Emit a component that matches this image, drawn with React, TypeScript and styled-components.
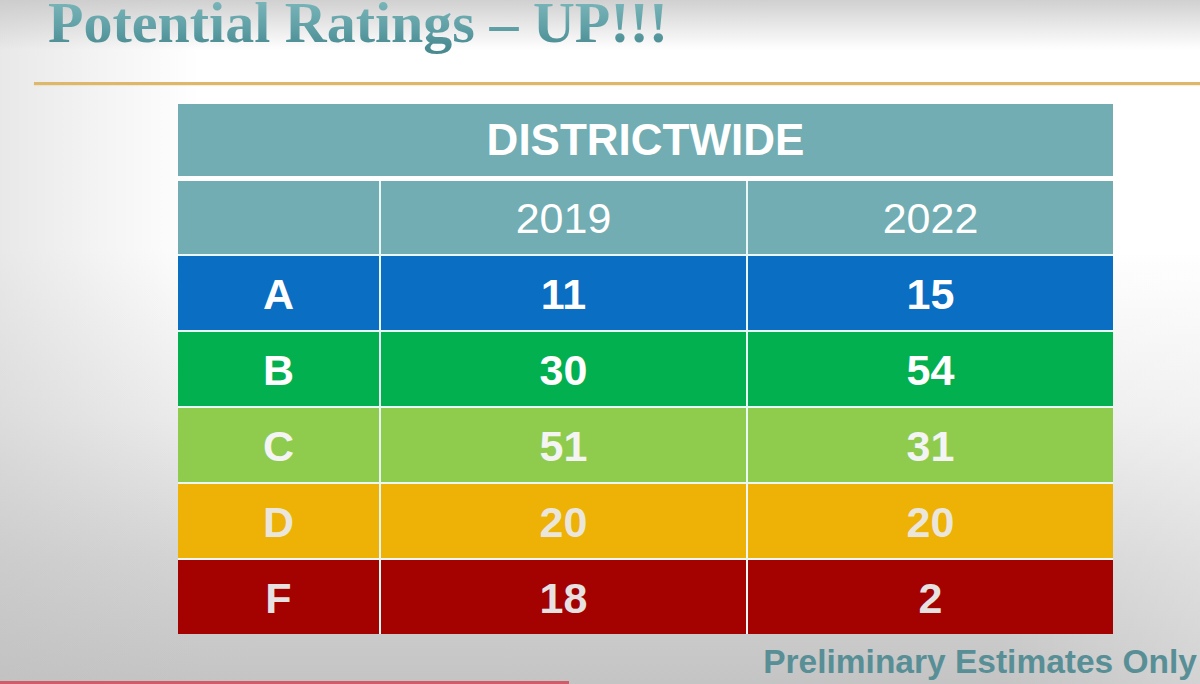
import React from "react";
import styled, { createGlobalStyle } from "styled-components";

const Global = createGlobalStyle`
  html, body { margin: 0; padding: 0; }
  body { width: 1200px; height: 684px; overflow: hidden; font-family: "Liberation Sans", Arial, sans-serif; }
`;

const Slide = styled.div`
  position: relative;
  width: 1200px;
  height: 684px;
  overflow: hidden;
  display: flex;
  flex-direction: column;
  background:
    linear-gradient(180deg, rgba(200,200,200,0.85) 0px, rgba(255,255,255,0) 50px),
    linear-gradient(90deg, rgba(190,190,190,0.35) 0px, rgba(255,255,255,0) 200px, rgba(255,255,255,0) 1000px, rgba(255,255,255,0.25) 1200px),
    linear-gradient(180deg, #ffffff 0px, #ffffff 250px, #ececec 420px, #d4d4d4 560px, #c4c4c4 684px);
`;

const Title = styled.h1`
  margin: 0 0 0 48px;
  padding-bottom: 14px;
  align-self: flex-start;
  font-family: "Liberation Serif", "Times New Roman", serif;
  font-weight: 700;
  font-size: 58px;
  line-height: 46px;
  white-space: nowrap;
  background: linear-gradient(180deg, #7ab6ba 0%, #5d9ea4 50%, #4a8a91 80%, #4a8a91 100%);
  -webkit-background-clip: text;
  background-clip: text;
  color: transparent;
`;

const Rule = styled.div`
  margin: 22px 0 0 34px;
  height: 3px;
  background: #dcb76c;
  box-shadow: 0 1px 1px rgba(230, 200, 140, 0.35);
`;

const Table = styled.div`
  margin: 19px 0 0 178px;
  width: 935px;
  display: flex;
  flex-direction: column;
`;

const Banner = styled.div`
  height: 72px;
  background: #71adb2;
  color: #ffffff;
  font-weight: 700;
  font-size: 44px;
  display: flex;
  align-items: center;
  justify-content: center;
  margin-bottom: 5px;
`;

const Grid = styled.div`
  display: grid;
  grid-template-columns: 201px 365px 365px;
  grid-template-rows: 73px repeat(5, 74px);
  gap: 2px;
  background: #e9f7f7;
`;

const Cell = styled.div<{ $bg: string; $fg: string; $bold?: boolean }>`
  background: ${(p) => p.$bg};
  color: ${(p) => p.$fg};
  font-weight: ${(p) => (p.$bold ? 700 : 400)};
  font-size: 43px;
  display: flex;
  align-items: center;
  justify-content: center;
  padding-top: 2px;
`;

const Note = styled.div`
  margin-top: 8px;
  align-self: flex-end;
  margin-right: 3px;
  font-weight: 700;
  font-size: 33.5px;
  line-height: 40px;
  color: #588f96;
  white-space: nowrap;
`;

const Progress = styled.div`
  position: absolute;
  left: 0;
  bottom: 0;
  width: 569px;
  height: 3px;
  background: #cf5c68;
`;

const rows = [
  { grade: "A", a: "11", b: "15", bg: "#0a6ec2", fg: "#ffffff" },
  { grade: "B", a: "30", b: "54", bg: "#03b04f", fg: "#ffffff" },
  { grade: "C", a: "51", b: "31", bg: "#8fcc4e", fg: "#f4f4f4" },
  { grade: "D", a: "20", b: "20", bg: "#eeb106", fg: "#ebe6dc" },
  { grade: "F", a: "18", b: "2", bg: "#a40101", fg: "#e6e2e2" },
];

export default function App() {
  return (
    <>
      <Global />
      <Slide>
        <Title>Potential Ratings – UP!!!</Title>
        <Rule />
        <Table>
          <Banner>DISTRICTWIDE</Banner>
          <Grid>
            <Cell $bg="#71adb2" $fg="#ffffff" />
            <Cell $bg="#71adb2" $fg="#ffffff">2019</Cell>
            <Cell $bg="#71adb2" $fg="#ffffff">2022</Cell>
            {rows.map((r) => (
              <React.Fragment key={r.grade}>
                <Cell $bg={r.bg} $fg={r.fg} $bold>{r.grade}</Cell>
                <Cell $bg={r.bg} $fg={r.fg} $bold>{r.a}</Cell>
                <Cell $bg={r.bg} $fg={r.fg} $bold>{r.b}</Cell>
              </React.Fragment>
            ))}
          </Grid>
        </Table>
        <Note>Preliminary Estimates Only</Note>
        <Progress />
      </Slide>
    </>
  );
}
